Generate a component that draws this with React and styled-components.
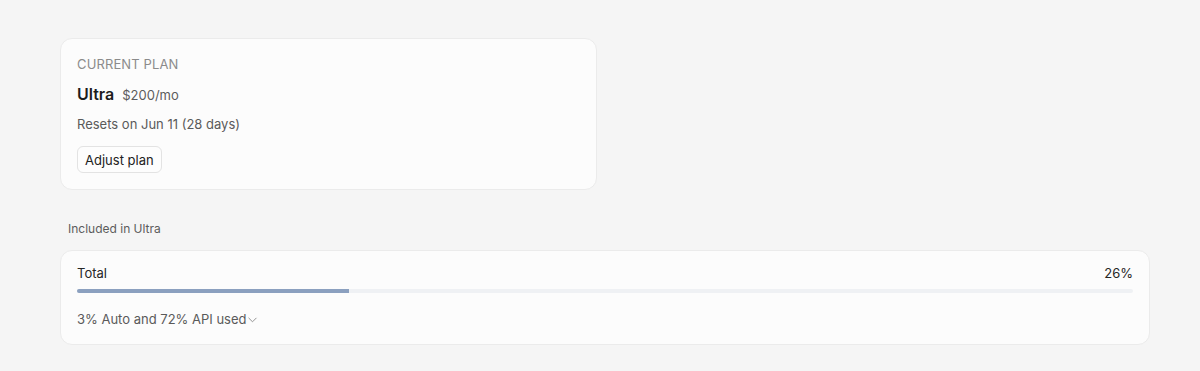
import styled, { createGlobalStyle } from "styled-components";

/* ---------------- GLOBAL ---------------- */

const GlobalStyle = createGlobalStyle`
  body {
    margin: 0;
    background: #f5f5f5;
    font-family: Inter, "Noto Sans", sans-serif;
    color: #1f1f1f;
    -webkit-font-smoothing: antialiased;
  }
`;

/* ---------------- PAGE ---------------- */

const Page = styled.div`
  padding: 38px 50px 26px 60px;
  display: flex;
  flex-direction: column;
`;

const Card = styled.div`
  background: #fcfcfc;
  border: 1px solid #ebebeb;
  border-radius: 12px;
  box-sizing: border-box;
  width: ${(p) => p.$width || "100%"};
  padding: ${(p) => p.$padding || "16px"};
  display: flex;
  flex-direction: column;
`;

/* ---------------- PLAN CARD ---------------- */

const Eyebrow = styled.div`
  font-size: 13px;
  line-height: 20px;
  letter-spacing: 0.01em;
  text-transform: uppercase;
  color: #8b8b8b;
`;

const PlanRow = styled.div`
  margin-top: 10px;
  display: flex;
  align-items: baseline;
  gap: 8px;
  line-height: 20px;
`;

const PlanName = styled.span`
  font-size: 16px;
  font-weight: 600;
  color: #1c1c1c;
`;

const Price = styled.span`
  font-size: 13px;
  color: #5c5c5c;
`;

const Muted = styled.div`
  margin-top: ${(p) => p.$top || "9px"};
  font-size: 13px;
  line-height: 20px;
  color: #5a5a5a;
  display: flex;
  align-items: center;
`;

const Button = styled.button`
  margin-top: 12px;
  align-self: flex-start;
  height: 27px;
  padding: 0 7px;
  background: #fdfdfd;
  border: 1px solid #e3e3e3;
  border-radius: 6px;
  font-family: inherit;
  font-size: 13px;
  color: #222;
  cursor: pointer;
`;

/* ---------------- USAGE ---------------- */

const SectionLabel = styled.div`
  margin: 30px 0 12px 8px;
  font-size: 12px;
  line-height: 18px;
  color: #5c5c5c;
`;

const TopRow = styled.div`
  display: flex;
  justify-content: space-between;
  font-size: 13px;
  line-height: 18px;
  color: #262626;
`;

const Track = styled.div`
  margin-top: 7px;
  height: 4px;
  border-radius: 2px;
  background: #eff1f4;
  overflow: hidden;
`;

const Fill = styled.div`
  height: 100%;
  background: #8ba0bf;
`;

const Chevron = () => (
  <svg width="11" height="11" viewBox="0 0 12 12" fill="none" stroke="#8a8a8a" strokeWidth="1" strokeLinecap="round" strokeLinejoin="round">
    <path d="M2 4.5l4 4 4-4" />
  </svg>
);

/* ---------------- COMPONENT ---------------- */

export default function App() {
  const used = 25.8;
  return (
    <>
      <GlobalStyle />
      <Page>
        <Card $width="537px" $padding="15px 16px 16px">
          <Eyebrow>Current plan</Eyebrow>
          <PlanRow>
            <PlanName>Ultra</PlanName>
            <Price>$200/mo</Price>
          </PlanRow>
          <Muted>Resets on Jun 11 (28 days)</Muted>
          <Button>Adjust plan</Button>
        </Card>

        <SectionLabel>Included in Ultra</SectionLabel>

        <Card $padding="13px 16px 15px">
          <TopRow>
            <span>Total</span>
            <span>26%</span>
          </TopRow>
          <Track>
            <Fill style={{ width: `${used}%` }} />
          </Track>
          <Muted $top="16px">
            3% Auto and 72% API used
            <Chevron />
          </Muted>
        </Card>
      </Page>
    </>
  );
}
